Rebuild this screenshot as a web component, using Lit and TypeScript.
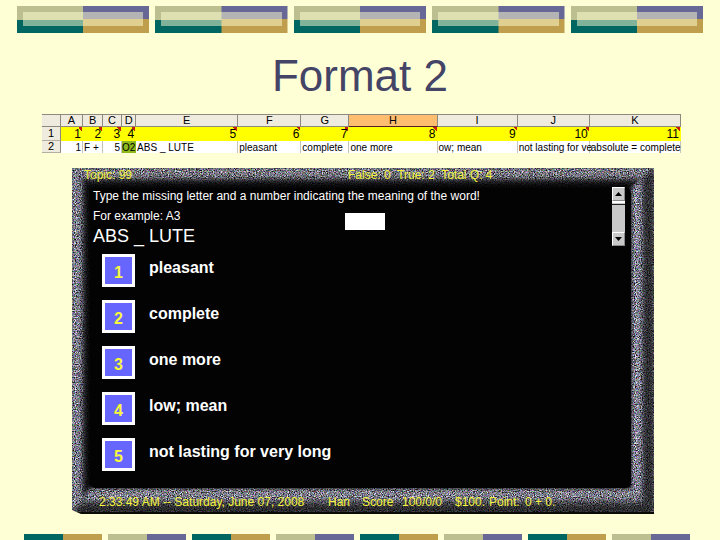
import { LitElement, html, css, svg } from "lit";
import { customElement, property } from "lit/decorators.js";

const COLUMNS = [
  { letter: "A", index: 1, value: "1", width: 22, numeric: true },
  { letter: "B", index: 2, value: "F +", width: 20, numeric: false },
  { letter: "C", index: 3, value: "5", width: 19, numeric: true },
  { letter: "D", index: 4, value: "O2", width: 14, numeric: false },
  { letter: "E", index: 5, value: "ABS _ LUTE", width: 102, numeric: false },
  { letter: "F", index: 6, value: "pleasant", width: 63, numeric: false },
  { letter: "G", index: 7, value: "complete", width: 48, numeric: false },
  { letter: "H", index: 8, value: "one more", width: 88, numeric: false },
  { letter: "I", index: 9, value: "ow; mean", width: 80, numeric: false },
  { letter: "J", index: 10, value: "not lasting for ve", width: 72, numeric: false },
  { letter: "K", index: 11, value: "absolute = complete", width: 91, numeric: false },
];

const CHOICES = ["pleasant", "complete", "one more", "low; mean", "not lasting for very long"];

@customElement("tile-border")
class TileBorder extends LitElement {
  @property({ type: Number }) count = 5;
  @property({ type: Boolean }) slim = false;

  static styles = css`
    :host { display: block; }
    .row { display: flex; gap: 6px; }
    .tile { flex: 1; height: 27px; box-sizing: border-box; padding: 6px 6px 7px;
      background:
        linear-gradient(#bcc090 14px, #006661 14px) left / 50% 100% no-repeat,
        linear-gradient(#686896 13px, #bf9e4d 13px) right / 50% 100% no-repeat; }
    .glass { height: 14px; background: rgba(255, 255, 212, 0.5); }
    .slim { flex: 1; height: 6px; background: linear-gradient(90deg, #006661 50%, #bf9e4d 50%); }
    .slim:nth-child(even) { background: linear-gradient(90deg, #bcc090 50%, #686896 50%); }
  `;

  render() {
    const tiles = Array.from({ length: this.count });
    return html`<div class="row">
      ${tiles.map(() => this.slim
        ? html`<div class="slim"></div>`
        : html`<div class="tile"><div class="glass"></div></div>`)}
    </div>`;
  }
}

@customElement("data-sheet")
class DataSheet extends LitElement {
  static styles = css`
    :host { display: block; }
    table { width: 100%; table-layout: fixed; border-collapse: separate; border-spacing: 0;
      font: 10px/11px "Liberation Sans", Arial, sans-serif; color: #000; border-top: 1px solid #8d897c; }
    th, td { padding: 0 0 0 1px; height: 12px; box-sizing: border-box; white-space: nowrap;
      font-weight: normal; text-align: left; border-right: 1px solid #c4c4bc; background: #fff; }
    thead th, tbody th { background: #efecdf; text-align: center; border-right: 1px solid #8d897c;
      padding: 0; font-size: 11px; }
    thead th { height: 12px; border-bottom: 1px solid #8d897c; }
    tbody th { border-bottom: 1px solid #b3afa2; }
    thead .active { background: #ffbd70; border-bottom-color: #54202a; }
    .numbers td { height: 14px; font-size: 12px; line-height: 14px; text-align: right;
      border-right-color: #ff0; padding: 0 1px;
      background: linear-gradient(45deg, transparent 50%, #c81e0a 50%) top right / 4px 4px no-repeat, #ff0; }
    td.num { text-align: right; padding-right: 1px; }
    td.answer { background: #8fb81c; padding: 0; border: 0; }
  `;

  render() {
    return html`<table>
      <colgroup>
        <col style="width:19px" />
        ${COLUMNS.map((c) => html`<col style="width:${c.width}px" />`)}
      </colgroup>
      <thead>
        <tr>
          <th></th>
          ${COLUMNS.map((c) => html`<th scope="col" class=${c.letter === "H" ? "active" : ""}>${c.letter}</th>`)}
        </tr>
      </thead>
      <tbody>
        <tr class="numbers">
          <th scope="row">1</th>
          ${COLUMNS.map((c) => html`<td>${c.index}</td>`)}
        </tr>
        <tr>
          <th scope="row">2</th>
          ${COLUMNS.map((c) => html`<td class=${c.letter === "D" ? "answer" : c.numeric ? "num" : ""}>${c.value}</td>`)}
        </tr>
      </tbody>
    </table>`;
  }
}

const stoneFrame = svg`
  <defs>
    <filter id="grain" x="0" y="0" width="100%" height="100%" color-interpolation-filters="sRGB">
      <feGaussianBlur in="SourceGraphic" stdDeviation="2" result="soft" />
      <feTurbulence type="fractalNoise" baseFrequency="0.85" numOctaves="2" seed="7" />
      <feColorMatrix values="1.6 0.8 0.8 0 -1.1  0.8 1.6 0.8 0 -1.1  0.8 0.8 1.6 0 -1.1  0 0 0 0 1" />
      <feComposite in2="soft" operator="arithmetic" k1="1.6" k2="0" k3="0.1" k4="0" />
    </filter>
    <linearGradient id="top" x2="0" y2="1">
      <stop offset="0" stop-color="#84848f" /><stop offset="0.45" stop-color="#84848f" />
      <stop offset="0.65" stop-color="#1c1c20" /><stop offset="1" stop-color="#030303" />
    </linearGradient>
    <linearGradient id="left">
      <stop offset="0" stop-color="#8c8c9c" /><stop offset="0.45" stop-color="#8c8c9c" />
      <stop offset="0.7" stop-color="#1c1c20" /><stop offset="1" stop-color="#030303" />
    </linearGradient>
    <linearGradient id="right">
      <stop offset="0" stop-color="#6c6c7c" /><stop offset="0.2" stop-color="#a4a4b8" />
      <stop offset="0.45" stop-color="#7c7c8c" /><stop offset="0.6" stop-color="#2c2c30" />
      <stop offset="1" stop-color="#38383c" />
    </linearGradient>
    <linearGradient id="bottom" x2="0" y2="1">
      <stop offset="0" stop-color="#84848f" /><stop offset="0.35" stop-color="#9090a0" />
      <stop offset="0.65" stop-color="#38383c" /><stop offset="1" stop-color="#242426" />
    </linearGradient>
  </defs>
  <g filter="url(#grain)">
    <rect x="-10" y="-10" width="602" height="366" fill="#6c6c78" />
    <rect x="12" y="12" width="560" height="320" fill="#030303" />
    <polygon points="0,0 18,20 18,320 0,346" fill="url(#left)" />
    <polygon points="559,18 582,0 582,346 559,320" fill="url(#right)" />
    <polygon points="0,0 582,0 559,20 18,20" fill="url(#top)" />
    <polygon points="0,346 18,320 559,320 582,346" fill="url(#bottom)" />
  </g>
  <rect x="18" y="20" width="541" height="300" rx="5" fill="#030303" />
  <rect y="344" width="582" height="2" fill="#0a0a04" />
  <polygon points="0,342 9,346 0,346" fill="#ffffd6" />
`;

@customElement("quiz-panel")
class QuizPanel extends LitElement {
  static styles = css`
    :host { display: block; font-family: "Liberation Sans", Arial, sans-serif; color: #fff; }
    .panel { position: relative; isolation: isolate; box-sizing: border-box; min-height: 346px;
      display: flex; flex-direction: column; background: #030303; }
    .stone { position: absolute; inset: 0; width: 100%; height: 100%; z-index: -1; }
    .score { height: 12px; display: flex; padding-left: 12px;
      font-size: 12px; line-height: 14px; color: #f0f03c; white-space: pre; }
    .topic { width: 264px; }
    .main { flex: 1; display: flex; padding: 6px 29px 0 21px; }
    .content { flex: 1; min-width: 0; }
    p { margin: 0; font-size: 12px; line-height: 20px; white-space: nowrap; }
    .line { display: flex; align-items: flex-start; height: 20px; }
    .line p { width: 252px; }
    .answer { width: 40px; height: 17px; box-sizing: border-box; margin-top: 7px; padding: 0 2px;
      border: 0; border-radius: 0; background: #fff; font: 12px "Liberation Sans", sans-serif; }
    h2 { margin: 0; font-size: 18px; line-height: 20px; font-weight: normal; }
    ol { list-style: none; margin: 8px 0 0; padding: 0 0 0 9px; display: grid; gap: 13px; }
    li { display: flex; gap: 14px; }
    .key { width: 33px; height: 33px; padding: 4px 0 0; border: 3px solid #fff; background: #6666ff;
      color: #f8f83c; font: bold 16px/20px "Liberation Sans", Arial, sans-serif; }
    label { font-size: 16px; font-weight: bold; line-height: 27px; }
    .scroll { width: 13px; height: 59px; margin-top: 1px; display: flex; flex-direction: column;
      background: #c8c8c8; }
    .arrow { width: 13px; height: 14px; padding: 0; border: 1px solid; border-color: #fff #888 #888 #fff;
      background: #c8c8c8; display: grid; place-items: center; }
    .thumb { height: 4px; box-sizing: border-box; border-top: 2px solid #fff; border-bottom: 1px solid #222; }
    .track { flex: 1; }
    footer { height: 26px; display: flex; padding: 0 0 0 27px; font-size: 12px; line-height: 28px;
      color: #f4f43c; white-space: pre; }
    .time { width: 229px; }
    .user { width: 34px; }
    .label { width: 40px; }
    .points { width: 53px; }
    .money { width: 34px; }
    .point { width: 36px; }
  `;

  render() {
    return html`<section class="panel">
      <svg class="stone" viewBox="0 0 582 346" preserveAspectRatio="none" aria-hidden="true">${stoneFrame}</svg>
      <div class="score"><span class="topic">Topic: 99</span><span>False: 0  True: 2  Total Q: 4</span></div>
      <div class="main">
        <div class="content">
          <p>Type the missing letter and a number indicating the meaning of the word!</p>
          <div class="line">
            <p>For example: A3</p>
            <input class="answer" type="text" aria-label="Your answer" />
          </div>
          <h2>ABS _ LUTE</h2>
          <ol>
            ${CHOICES.map((text, i) => html`<li>
              <button class="key" id="key-${i}">${i + 1}</button>
              <label for="key-${i}">${text}</label>
            </li>`)}
          </ol>
        </div>
        <div class="scroll">
          <button class="arrow" aria-label="Scroll up">
            <svg width="7" height="4" viewBox="0 0 7 4"><path d="M3.5 0 7 4H0z" fill="#000" /></svg>
          </button>
          <div class="thumb"></div>
          <div class="track"></div>
          <button class="arrow" aria-label="Scroll down">
            <svg width="7" height="4" viewBox="0 0 7 4"><path d="M0 0h7L3.5 4z" fill="#000" /></svg>
          </button>
        </div>
      </div>
      <footer><span class="time">2:33:49 AM -- Saturday, June 07, 2008</span><span class="user">Han</span><span
          class="label">Score</span><span class="points">100/0/0</span><span class="money">$100.</span><span
          class="point">Point:</span><span>0 + 0.</span></footer>
    </section>`;
  }
}

@customElement("app-root")
class AppRoot extends LitElement {
  static styles = css`
    :host { display: flex; flex-direction: column; min-height: 100vh; background: #ffffd6;
      font-family: "Liberation Sans", Arial, sans-serif; }
    .top { margin: 6px 17px 0; }
    h1 { margin: 18px 0 13px; font-size: 44px; line-height: 50px; font-weight: normal; text-align: center;
      color: #444466; }
    data-sheet { margin: 0 39px 0 42px; }
    quiz-panel { margin: 15px 66px 20px 72px; }
    .bottom { margin: auto 30px 0 24px; }
  `;

  render() {
    return html`
      <tile-border class="top" count="5"></tile-border>
      <h1>Format 2</h1>
      <data-sheet></data-sheet>
      <quiz-panel></quiz-panel>
      <tile-border class="bottom" count="8" slim></tile-border>
    `;
  }
}
